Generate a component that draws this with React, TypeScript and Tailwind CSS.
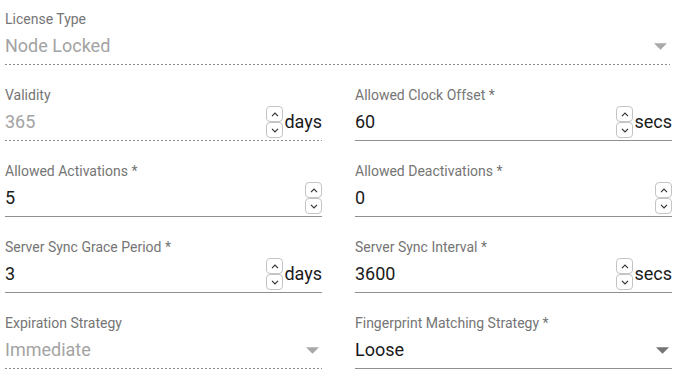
import { ReactNode } from "react";

const font = { fontFamily: "Roboto, 'Liberation Sans', sans-serif" };

const DropArrow = ({ disabled }: { disabled?: boolean }) => (
  <svg viewBox="7 10 10 5" className="w-[13px] h-[7px] mr-[3px]" fill={disabled ? "#a8a8a8" : "#757575"}>
    <path d="M7 10l5 5 5-5z" />
  </svg>
);

const Spinner = () => (
  <div className="flex flex-col w-[17px] shrink-0">
    <div className="h-[16px] border border-[#c4c4c4] rounded-[4px] flex items-center justify-center bg-white">
      <svg viewBox="0 0 8 5" className="w-[8px] h-[5px]" fill="none" stroke="#333" strokeWidth="1.2">
        <path d="M1 4.2 4 1.2 7 4.2" />
      </svg>
    </div>
    <div className="h-[16px] border border-[#c4c4c4] rounded-[4px] flex items-center justify-center bg-white">
      <svg viewBox="0 0 8 5" className="w-[8px] h-[5px]" fill="none" stroke="#333" strokeWidth="1.2">
        <path d="M1 0.8 4 3.8 7 0.8" />
      </svg>
    </div>
  </div>
);

interface FieldProps {
  label: string;
  value: string;
  disabled?: boolean;
  children?: ReactNode;
  className?: string;
}

const Field = ({ label, value, disabled, children, className = "pt-[22px]" }: FieldProps) => (
  <div className={className}>
    <div className="text-[14px] leading-[16px] text-[#757575]">{label}</div>
    <div className="mt-[7px] h-[30px] flex items-start">
      <div className="flex-1 flex items-center h-[24px]">
        <span className={`flex-1 text-[18px] leading-[24px] ${disabled ? "text-[#a3a3a3]" : "text-[#1a1a1a]"}`}>
          {value}
        </span>
        {children}
      </div>
    </div>
    {disabled ? (
      <div className="h-px bg-[linear-gradient(to_right,#8c8c8c_40%,transparent_0%)] bg-[length:4px_1px] bg-repeat-x" />
    ) : (
      <div className="h-px bg-[#8f8f8f]" />
    )}
  </div>
);

const NumberExtras = ({ unit }: { unit?: string }) => (
  <div className="flex items-center">
    <Spinner />
    {unit && <span className="text-[18px] leading-[24px] text-[#1a1a1a] ml-[1px]">{unit}</span>}
  </div>
);

export default function App() {
  return (
    <div className="w-[690px] h-[386px] bg-white overflow-hidden pl-[5px]" style={font}>
      <Field label="License Type" value="Node Locked" disabled className="w-[665px] pt-[11px]">
        <DropArrow disabled />
      </Field>
      <div className="grid grid-cols-[317px_317px] gap-x-[33px]">
        <Field label="Validity" value="365" disabled>
          <NumberExtras unit="days" />
        </Field>
        <Field label="Allowed Clock Offset *" value="60">
          <NumberExtras unit="secs" />
        </Field>
        <Field label="Allowed Activations *" value="5">
          <NumberExtras />
        </Field>
        <Field label="Allowed Deactivations *" value="0">
          <NumberExtras />
        </Field>
        <Field label="Server Sync Grace Period *" value="3">
          <NumberExtras unit="days" />
        </Field>
        <Field label="Server Sync Interval *" value="3600">
          <NumberExtras unit="secs" />
        </Field>
        <Field label="Expiration Strategy" value="Immediate" disabled>
          <DropArrow disabled />
        </Field>
        <Field label="Fingerprint Matching Strategy *" value="Loose">
          <DropArrow />
        </Field>
      </div>
    </div>
  );
}
